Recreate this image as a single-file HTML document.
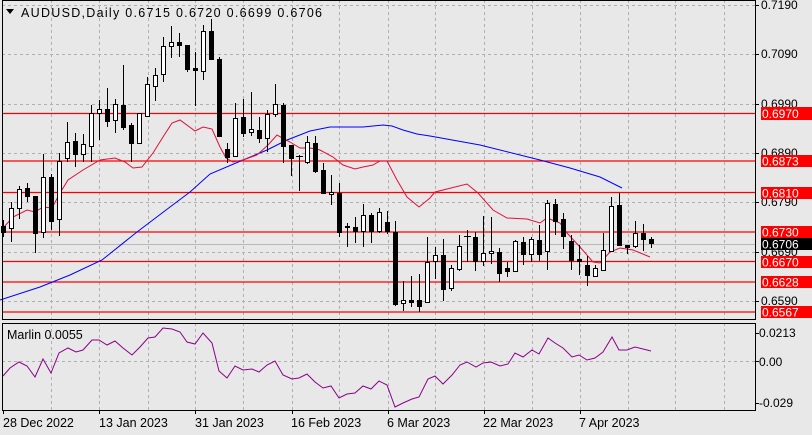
<!DOCTYPE html>
<html><head><meta charset="utf-8"><style>
html,body{margin:0;padding:0;background:#e8e8e8;}
svg{display:block;font-family:"Liberation Sans",sans-serif;font-size:12px;}
</style></head><body>
<svg width="812" height="435" viewBox="0 0 812 435" xmlns="http://www.w3.org/2000/svg">
<rect width="812" height="435" fill="#e8e8e8"/>
<g stroke="#b0b0b0" stroke-dasharray="3,3" stroke-width="1">
<path d="M51.5 0V319M99.5 0V319M148.5 0V319M195.5 0V319M243.5 0V319M292.5 0V319M339.5 0V319M388.5 0V319M435.5 0V319M484.5 0V319M532.5 0V319M580.5 0V319M628.5 0V319M675.5 0V319M724.5 0V319"/>
<path d="M51.5 323V410M99.5 323V410M148.5 323V410M195.5 323V410M243.5 323V410M292.5 323V410M339.5 323V410M388.5 323V410M435.5 323V410M484.5 323V410M532.5 323V410M580.5 323V410M628.5 323V410M675.5 323V410M724.5 323V410"/>
<path d="M2 5.5H755M2 54.5H755M2 104.5H755M2 153.5H755M2 202.5H755M2 252.5H755M2 301.5H755M2 361.5H755"/>
</g>
<path d="M2 244.5H755" stroke="#b8b8b8"/>
<g stroke="#ff0000" stroke-width="1.3">
<path d="M2 113.5H755M2 161H755M2 192.5H755M2 232H755M2 261.5H755M2 282H755M2 312H755"/>
</g>
<polyline fill="none" stroke="#0000ff" stroke-width="1" points="0,300 40,287 70,275 102,260 137,232 170,207 190,192 210,174 243,160 267,150 287,140 310,131 330,127 363,127 383,125 392,126 403,130 417,134 430,136 480,145 540,160 570,168 600,177 622,188"/>
<polyline fill="none" stroke="#e0103a" stroke-width="1" points="3,228 13,217 27,210 35,212 43,207 52,208 60,193 68,180 83,170 100,160 115,158 125,162 133,168 142,167 153,153 163,137 172,123 180,120 195,131 203,127 212,129 220,147 226,158 233,162 243,160 257,155 268,145 277,135 290,142 300,148 310,148 320,150 333,157 343,165 355,169 363,167 373,165 380,161 387,161 397,180 407,197 419,207 430,198 435,192 447,189 467,184 478,193 493,210 507,218 527,219 540,223 547,218 560,223 567,233 580,247 593,262 600,263 610,252 620,248 633,250 650,257"/>
<path stroke="#000" stroke-width="1" fill="none" d="M3.5 220V237M11.5 202V242M19.5 186V219M27.5 183V202M35.5 196V253M43.5 154V238M51.5 174V230M59.5 153V236M67.5 122V162M75.5 133V167M83.5 134V162M91.5 105V162M99.5 100V140M107.5 88V127M115.5 99V133M123.5 65V130M131.5 123V162M139.5 113V144M147.5 77V116M155.5 68V101M163.5 37V82M171.5 26V58M179.5 33V57M187.5 45V72M195.5 52V106M203.5 25V80M211.5 19V60M219.5 57V137M227.5 143V163M235.5 103V157M243.5 99V137M251.5 92V136M259.5 117V143M267.5 110V152M275.5 84V117M283.5 103V163M291.5 145V176M299.5 155V191M296 156.5H303M307.5 136V164M315.5 136V173M323.5 163V194M331.5 175V205M339.5 183V237M347.5 223V247M355.5 217V243M363.5 204V247M371.5 213V243M379.5 208V233M387.5 211V234M395.5 221V306M403.5 281V311M411.5 276V307M419.5 274V312M427.5 237V302M435.5 247V279M443.5 239V301M451.5 265V291M459.5 235V271M467.5 230V262M464 236.5H471M475.5 232V271M483.5 216V266M491.5 217V264M499.5 248V282M507.5 262V277M515.5 240V272M523.5 237V265M531.5 237V262M539.5 225V261M547.5 200V270M555.5 199V235M563.5 213V249M571.5 235V270M579.5 245V275M587.5 256V286M595.5 265V277M603.5 233V271M611.5 197V252M619.5 193V246M627.5 245V254M635.5 221V248M643.5 224V251M651.5 237V248"/>
<g fill="#fff" stroke="#000" stroke-width="1">
<rect x="9.5" y="208.5" width="4" height="20"/><rect x="17.5" y="189.5" width="4" height="19"/><rect x="41.5" y="177.5" width="4" height="55"/><rect x="57.5" y="161.5" width="4" height="58"/><rect x="65.5" y="142.5" width="4" height="16"/><rect x="81.5" y="144.5" width="4" height="10"/><rect x="89.5" y="113.5" width="4" height="33"/><rect x="97.5" y="109.5" width="4" height="4"/><rect x="113.5" y="104.5" width="4" height="16"/><rect x="137.5" y="113.5" width="4" height="30"/><rect x="145.5" y="84.5" width="4" height="32"/><rect x="153.5" y="75.5" width="4" height="11"/><rect x="161.5" y="46.5" width="4" height="28"/><rect x="169.5" y="42.5" width="4" height="4"/><rect x="201.5" y="31.5" width="4" height="40"/><rect x="233.5" y="118.5" width="4" height="38"/><rect x="249.5" y="129.5" width="4" height="3"/><rect x="265.5" y="114.5" width="4" height="24"/><rect x="273.5" y="104.5" width="4" height="10"/><rect x="305.5" y="142.5" width="4" height="20"/><rect x="329.5" y="192.5" width="4" height="2"/><rect x="361.5" y="215.5" width="4" height="16"/><rect x="377.5" y="212.5" width="4" height="19"/><rect x="401.5" y="300.5" width="4" height="3"/><rect x="425.5" y="262.5" width="4" height="40"/><rect x="433.5" y="255.5" width="4" height="6"/><rect x="449.5" y="268.5" width="4" height="20"/><rect x="457.5" y="246.5" width="4" height="23"/><rect x="481.5" y="253.5" width="4" height="8"/><rect x="489.5" y="251.5" width="4" height="2"/><rect x="513.5" y="241.5" width="4" height="30"/><rect x="529.5" y="239.5" width="4" height="15"/><rect x="545.5" y="203.5" width="4" height="48"/><rect x="593.5" y="268.5" width="4" height="8"/><rect x="601.5" y="250.5" width="4" height="20"/><rect x="609.5" y="206.5" width="4" height="45"/><rect x="633.5" y="233.5" width="4" height="13"/>
</g>
<g fill="#000" stroke="#000" stroke-width="1">
<rect x="1.5" y="226.5" width="4" height="6"/><rect x="25.5" y="188.5" width="4" height="8"/><rect x="33.5" y="196.5" width="4" height="37"/><rect x="49.5" y="177.5" width="4" height="44"/><rect x="73.5" y="141.5" width="4" height="13"/><rect x="105.5" y="109.5" width="4" height="12"/><rect x="121.5" y="105.5" width="4" height="22"/><rect x="129.5" y="125.5" width="4" height="18"/><rect x="177.5" y="42.5" width="4" height="3"/><rect x="185.5" y="45.5" width="4" height="24"/><rect x="193.5" y="68.5" width="4" height="2"/><rect x="209.5" y="31.5" width="4" height="28"/><rect x="217.5" y="59.5" width="4" height="77"/><rect x="225.5" y="149.5" width="4" height="8"/><rect x="241.5" y="117.5" width="4" height="16"/><rect x="257.5" y="130.5" width="4" height="8"/><rect x="281.5" y="105.5" width="4" height="41"/><rect x="289.5" y="145.5" width="4" height="13"/><rect x="313.5" y="143.5" width="4" height="28"/><rect x="321.5" y="170.5" width="4" height="23"/><rect x="337.5" y="193.5" width="4" height="39"/><rect x="345.5" y="226.5" width="4" height="1"/><rect x="353.5" y="227.5" width="4" height="4"/><rect x="369.5" y="215.5" width="4" height="16"/><rect x="385.5" y="222.5" width="4" height="9"/><rect x="393.5" y="232.5" width="4" height="72"/><rect x="409.5" y="300.5" width="4" height="2"/><rect x="417.5" y="300.5" width="4" height="6"/><rect x="441.5" y="255.5" width="4" height="34"/><rect x="473.5" y="237.5" width="4" height="24"/><rect x="497.5" y="252.5" width="4" height="21"/><rect x="505.5" y="268.5" width="4" height="3"/><rect x="521.5" y="242.5" width="4" height="12"/><rect x="537.5" y="240.5" width="4" height="14"/><rect x="553.5" y="204.5" width="4" height="17"/><rect x="561.5" y="219.5" width="4" height="17"/><rect x="569.5" y="241.5" width="4" height="19"/><rect x="577.5" y="259.5" width="4" height="2"/><rect x="585.5" y="265.5" width="4" height="10"/><rect x="617.5" y="205.5" width="4" height="40"/><rect x="625.5" y="245.5" width="4" height="2"/><rect x="641.5" y="233.5" width="4" height="6"/><rect x="649.5" y="239.5" width="4" height="4"/>
</g>
<polyline fill="none" stroke="#8b008b" stroke-width="1" points="3,376 10,368 19,362 27,366 35,377 43,359 51,373 59,353 68,348 76,352 83,350 92,340 99,340 107,345 115,341 123,348 132,355 140,347 148,338 155,337 163,328 172,329 180,332 187,342 195,344 203,333 212,343 219,371 227,378 235,366 243,370 252,369 259,372 267,365 275,361 283,375 292,379 299,378 307,374 315,382 323,388 331,386 339,398 347,394 355,393 363,386 371,389 379,381 387,385 395,407 403,403 412,399 419,397 428,379 435,376 443,384 452,375 460,365 467,362 476,367 483,363 491,362 500,366 508,364 515,353 523,357 532,350 539,354 548,338 555,343 563,348 572,357 579,355 587,360 595,358 603,352 612,337 619,350 627,350 635,347 643,349 651,351"/>
<g fill="none" stroke="#000" stroke-width="1">
<path d="M2.5 0.5H755.5V319.5H2.5Z"/>
<path d="M2.5 323.5H755.5V410.5H2.5Z"/>
</g>
<path stroke="#000" d="M755 5.5h4M755 54.5h4M755 104.5h4M755 153.5h4M755 202.5h4M755 252.5h4M755 301.5h4M755 333.5h4M755 361.5h4M755 403.5h4M3.5 410v4M99.5 410v4M195.5 410v4M292.5 410v4M388.5 410v4M484.5 410v4M580.5 410v4"/>
<path d="M6 9h8l-4 5z" fill="#000"/>
<text x="21" y="17" fill="#000" style="font-size:12.5px" textLength="301">AUDUSD,Daily  0.6715 0.6720 0.6699 0.6706</text>
<text x="7" y="339" fill="#000" style="font-size:12.5px">Marlin 0.0055</text>
<g fill="#000">
<text x="761" y="9">0.7190</text>
<text x="761" y="58">0.7090</text>
<text x="761" y="108">0.6990</text>
<text x="761" y="157">0.6890</text>
<text x="761" y="206">0.6790</text>
<text x="761" y="256">0.6690</text>
<text x="761" y="305">0.6590</text>
<text x="759" y="337">0.0213</text>
<text x="759" y="366">0.00</text>
<text x="759" y="407">-0.029</text>
</g>
<g>
<rect x="761" y="107" width="51" height="13" fill="#ff0000"/>
<rect x="761" y="155" width="51" height="12" fill="#ff0000"/>
<rect x="761" y="187" width="51" height="12" fill="#ff0000"/>
<rect x="761" y="226" width="51" height="12" fill="#ff0000"/>
<rect x="761" y="238" width="51" height="12" fill="#000"/>
<rect x="761" y="256" width="51" height="12" fill="#ff0000"/>
<rect x="761" y="276" width="51" height="12" fill="#ff0000"/>
<rect x="761" y="306" width="51" height="12" fill="#ff0000"/>
</g>
<g fill="#fff">
<text x="762" y="118">0.6970</text>
<text x="762" y="165.5">0.6873</text>
<text x="762" y="197.5">0.6810</text>
<text x="762" y="236.5">0.6730</text>
<text x="762" y="248.5">0.6706</text>
<text x="762" y="266.5">0.6670</text>
<text x="762" y="286.5">0.6628</text>
<text x="762" y="316.5">0.6567</text>
</g>
<g fill="#000" style="font-size:12.5px">
<text x="3" y="427">28 Dec 2022</text>
<text x="99" y="427">13 Jan 2023</text>
<text x="195" y="427">31 Jan 2023</text>
<text x="291" y="427">16 Feb 2023</text>
<text x="387" y="427">6 Mar 2023</text>
<text x="483" y="427">22 Mar 2023</text>
<text x="579" y="427">7 Apr 2023</text>
</g>
</svg>
</body></html>
